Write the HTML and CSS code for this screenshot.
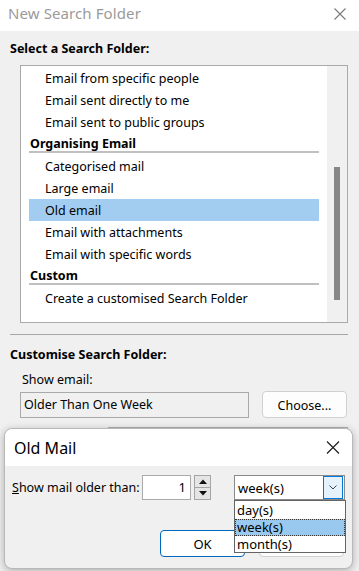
FILE: index.html
```html
<!DOCTYPE html>
<html>
<head>
<meta charset="utf-8">
<link rel="stylesheet" href="styles.css">
</head>
<body>
<div class="window">
  <div class="titlebar">
    <span class="title">New Search Folder</span>
    <svg class="close" width="12" height="12" viewBox="0 0 12 12"><path d="M0.5 0.5 L11.5 11.5 M11.5 0.5 L0.5 11.5" stroke="#7a7a7a" stroke-width="1.1" fill="none"/></svg>
  </div>
  <div class="content">
    <div class="section-label">Select a Search Folder:</div>
    <div class="listbox">
      <div class="list">
        <div class="item">Email from specific people</div>
        <div class="item">Email sent directly to me</div>
        <div class="item">Email sent to public groups</div>
        <div class="group">Organising Email</div>
        <div class="item">Categorised mail</div>
        <div class="item">Large email</div>
        <div class="item selected">Old email</div>
        <div class="item">Email with attachments</div>
        <div class="item">Email with specific words</div>
        <div class="group">Custom</div>
        <div class="item">Create a customised Search Folder</div>
      </div>
      <div class="scrollbar"><div class="thumb"></div></div>
    </div>
    <div class="sep"></div>
    <div class="section-label second">Customise Search Folder:</div>
    <div class="field-label">Show email:</div>
    <div class="field-row">
      <div class="textbox">Older Than One Week</div>
      <div class="btn choose">Choose...</div>
    </div>
    <div class="behind-row"><div class="behind-box"></div></div>
  </div>
</div>

<div class="modal">
  <div class="modal-title">
    <span>Old Mail</span>
    <svg class="modal-close" width="14" height="13" viewBox="0 0 14 13"><path d="M1 0.5 L13 12.5 M13 0.5 L1 12.5" stroke="#1a1a1a" stroke-width="1.1" fill="none"/></svg>
  </div>
  <div class="modal-body">
    <div class="modal-row">
      <span class="mlabel"><u>S</u>how mail older than:</span>
      <div class="numbox">1</div>
      <div class="spin">
        <div class="spin-btn"><svg width="8" height="5" viewBox="0 0 8 5"><path d="M0 5 L4 0.5 L8 5 Z" fill="#111"/></svg></div>
        <div class="spin-btn"><svg width="8" height="5" viewBox="0 0 8 5"><path d="M0 0 L4 4.5 L8 0 Z" fill="#111"/></svg></div>
      </div>
      <div class="combo">
        <span class="combo-text">week(s)</span>
        <div class="combo-btn"><svg width="8" height="5" viewBox="0 0 8 5"><path d="M0.5 0.5 L4 4 L7.5 0.5" stroke="#444" stroke-width="1" fill="none"/></svg></div>
      </div>
    </div>
    <div class="modal-buttons">
      <div class="btn ok">OK</div>
      <div class="btn cancel" aria-label="Cancel"></div>
    </div>
  </div>
  <div class="dropdown">
    <div class="dd-item">day(s)</div>
    <div class="dd-item active">week(s)</div>
    <div class="dd-item">month(s)</div>
  </div>
</div>
</body>
</html>
```
FILE: styles.css
```css
* { box-sizing: border-box; }
html, body {
  margin: 0;
  padding: 0;
  background: #f0f0f0;
  font-family: "Noto Sans", "Open Sans", sans-serif;
  font-size: 12.5px;
  color: #000;
  width: 359px;
  height: 571px;
  overflow: hidden;
}
.window { position: relative; }
.titlebar {
  height: 31px;
  background: #fff;
  display: flex;
  align-items: center;
  justify-content: space-between;
  padding: 0 13px 5px 8px;
}
.title {
  font-size: 15px;
  color: #9a9a9a;
  letter-spacing: 0.1px;
}
.close { display: block; position: relative; top: 1px; }
.content {
  padding: 9px 11px 0 10px;
}
.section-label {
  font-weight: bold;
  line-height: 18px;
  height: 18px;
}
.listbox {
  margin: 7px 0 0 10px;
  width: 328px;
  height: 258px;
  border: 1px solid #a9a9a9;
  background: #fff;
  display: flex;
}
.list {
  width: 306px;
  padding: 1px 0 0 8px;
}
.item {
  width: 290px;
  height: 22px;
  padding: 1px 0 0 16px;
  line-height: 21px;
  white-space: nowrap;
}
.item.selected { background: #a3cdf0; }
.group {
  width: 290px;
  height: 20px;
  line-height: 19px;
  padding: 1px 0 0 1px;
  font-weight: bold;
  border-bottom: 2px solid #c0c0c0;
  margin-bottom: 2px;
}
.scrollbar {
  width: 20px;
  background: #f0f0f0;
  padding: 101px 0 0 7px;
}
.thumb {
  width: 6px;
  height: 133px;
  background: #868686;
}
.sep {
  margin-top: 11px;
  height: 1px;
  background: #a7a7a7;
}
.section-label.second { margin-top: 9px; line-height: 19px; padding-top: 1px; }
.field-label {
  margin: 8px 0 0 12px;
  line-height: 19px;
  height: 18px;
}
.field-row {
  margin: 3px 0 0 10px;
  display: flex;
  align-items: center;
  gap: 13px;
}
.textbox {
  width: 229px;
  height: 26px;
  border: 1px solid #a9a9a9;
  background: #f0f0f0;
  line-height: 23px;
  padding-left: 3px;
  font-size: 12.5px;
}
.btn {
  border: 1px solid #d0d0d0;
  border-radius: 4px;
  background: #fdfdfd;
  display: flex;
  align-items: center;
  justify-content: center;
  font-size: 12.5px;
}
.choose {
  width: 85px;
  height: 27px;
  padding-top: 1px;
}
.behind-row {
  margin-top: 9px;
  padding-left: 98px;
}
.behind-box {
  height: 30px;
  border: 1px solid #b0b0b0;
  background: #f0f0f0;
}

/* Old Mail dialog overlay */
.modal {
  position: absolute;
  left: 4px;
  top: 428px;
  width: 349px;
  height: 141px;
  border: 1px solid #b8b8b8;
  border-radius: 8px;
  background: #f0f0f0;
  box-shadow: 0 2px 8px rgba(0,0,0,0.28);
}
.modal-title {
  height: 37px;
  background: #fff;
  border-radius: 8px 8px 0 0;
  display: flex;
  align-items: center;
  justify-content: space-between;
  padding: 0 12px 0 9px;
  font-size: 16px;
}
.modal-close { display: block; }
.modal-body {
  padding: 9px 7px 0 7px;
}
.modal-row {
  display: flex;
  align-items: center;
  height: 25px;
}
.mlabel {
  font-size: 12.5px;
  width: 130px;
  flex-shrink: 0;
  white-space: nowrap;
}
.numbox {
  width: 49px;
  height: 25px;
  border: 1px solid #aaa;
  background: #fff;
  text-align: right;
  padding-right: 4px;
  line-height: 23px;
  font-size: 13px;
}
.spin {
  margin-left: 3px;
  width: 17px;
  height: 25px;
  display: flex;
  flex-direction: column;
}
.spin-btn {
  flex: 1;
  border: 1px solid #a5a5a5;
  background: #e5e5e5;
  display: flex;
  align-items: center;
  justify-content: center;
}
.spin-btn + .spin-btn { border-top: none; }
.combo {
  margin-left: 23px;
  width: 111px;
  height: 25px;
  border: 1px solid #8a8a8a;
  background: #fff;
  display: flex;
  align-items: center;
  justify-content: space-between;
  padding: 0 1px 0 3px;
  font-size: 13px;
}
.combo-btn {
  width: 20px;
  height: 23px;
  border: 1px solid #0078d7;
  background: #e5f1fb;
  display: flex;
  align-items: center;
  justify-content: center;
}
.modal-buttons {
  margin-top: 30px;
  display: flex;
  padding-left: 148px;
  gap: 14px;
}
.modal-buttons .btn {
  width: 85px;
  height: 27px;
  font-size: 13px;
}
.ok {
  border-color: #0067c0 !important;
  background: #fff !important;
}
.dropdown {
  position: absolute;
  left: 229px;
  top: 71px;
  width: 112px;
  height: 53px;
  border: 1px solid #646464;
  background: #fff;
  padding-top: 1px;
  font-size: 13px;
}
.dd-item {
  height: 17px;
  line-height: 17px;
  padding-left: 2px;
}
.dd-item.active {
  background: #99c9ef;
  outline: 1px dotted #333;
  outline-offset: -1px;
}
```
